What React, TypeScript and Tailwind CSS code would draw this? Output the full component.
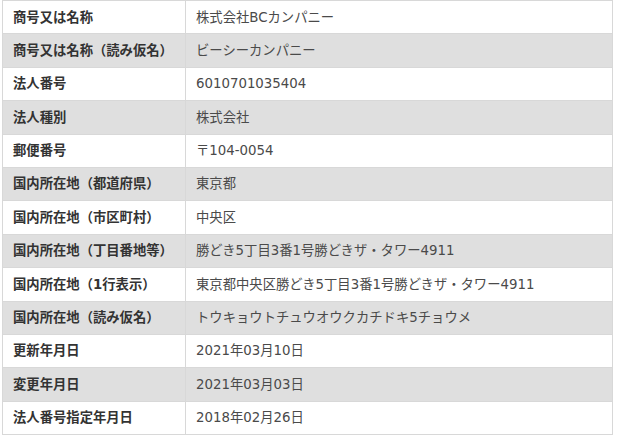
import React from "react";

const ROWS: [string, string][] = [
  ["商号又は名称", "株式会社BCカンパニー"],
  ["商号又は名称（読み仮名）", "ビーシーカンパニー"],
  ["法人番号", "6010701035404"],
  ["法人種別", "株式会社"],
  ["郵便番号", "〒104-0054"],
  ["国内所在地（都道府県）", "東京都"],
  ["国内所在地（市区町村）", "中央区"],
  ["国内所在地（丁目番地等）", "勝どき5丁目3番1号勝どきザ・タワー4911"],
  ["国内所在地（1行表示）", "東京都中央区勝どき5丁目3番1号勝どきザ・タワー4911"],
  ["国内所在地（読み仮名）", "トウキョウトチュウオウクカチドキ5チョウメ"],
  ["更新年月日", "2021年03月10日"],
  ["変更年月日", "2021年03月03日"],
  ["法人番号指定年月日", "2018年02月26日"],
];

export default function App() {
  return (
    <div
      className="w-[617px] h-[437px] bg-white pl-[2px] text-[13.33px]"
      style={{ fontFamily: '"DejaVu Sans", "Noto Sans CJK JP", sans-serif' }}
    >
      <table className="w-[611px] border-collapse table-fixed">
        <colgroup>
          <col className="w-[183px]" />
          <col />
        </colgroup>
        <tbody>
          {ROWS.map(([label, value], i) => (
            <tr
              key={label}
              className={`h-[33.4px] ${i % 2 === 1 ? "bg-[#dfdfdf]" : "bg-white"}`}
            >
              <th className="border border-[#d8d8d8] pl-[10px] text-left font-bold text-[#333333] leading-none">
                {label}
              </th>
              <td className="border border-[#d8d8d8] pl-[10px] text-[#4a4a4a] leading-none">
                {value}
              </td>
            </tr>
          ))}
        </tbody>
      </table>
    </div>
  );
}
